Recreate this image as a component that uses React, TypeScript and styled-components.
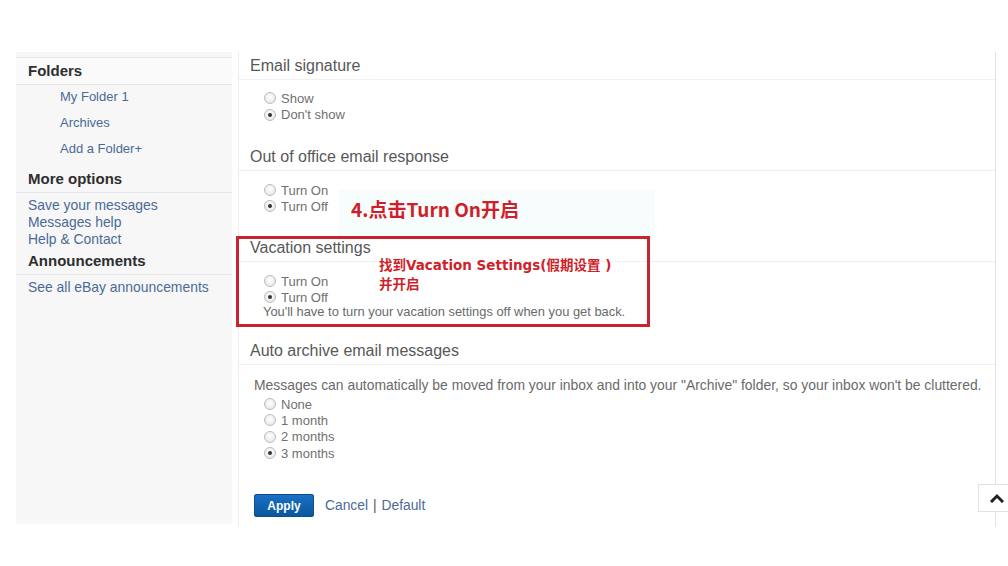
import React from "react";
import styled, { createGlobalStyle } from "styled-components";

const Global = createGlobalStyle`
  html, body { margin: 0; padding: 0; background: #ffffff; }
  body { font-family: "Liberation Sans", Arial, sans-serif; }
  #root { width: 1008px; height: 566px; overflow: hidden; position: relative; }
`;

const Page = styled.div`
  display: flex;
  align-items: flex-start;
  padding: 52px 0 0 16px;
  position: relative;
  height: 566px;
  box-sizing: border-box;
`;

const Sidebar = styled.aside`
  width: 216px;
  height: 470px;
  background: #f7f7f7;
  padding-top: 5px;
  box-sizing: border-box;
  box-shadow: 0 2px 2px rgba(0, 0, 0, 0.03);
`;

const SideHeader = styled.div<{ $top?: boolean; $mt?: number }>`
  height: 26px;
  line-height: 26px;
  margin-top: ${(p) => p.$mt ?? 0}px;
  padding-left: 12px;
  font-size: 15px;
  font-weight: bold;
  color: #2e2e2e;
  border-bottom: 1px solid #e6e6e6;
  border-top: ${(p) => (p.$top ? "1px solid #e6e6e6" : "none")};
  background: ${(p) => (p.$top ? "#fafafa" : "transparent")};
`;

const FolderList = styled.div`
  display: flex;
  flex-direction: column;
  padding-left: 44px;
  margin-top: -1px;
`;

const FolderLink = styled.a`
  height: 26px;
  line-height: 26px;
  font-size: 13px;
  color: #4a6a96;
  text-decoration: none;
`;

const LinkList = styled.div<{ $mt?: number }>`
  display: flex;
  flex-direction: column;
  padding-left: 12px;
  margin-top: ${(p) => p.$mt ?? 4}px;
`;

const SideLink = styled.a`
  height: 17px;
  line-height: 17px;
  font-size: 13.9px;
  color: #4a6a96;
  text-decoration: none;
`;

const Main = styled.main`
  margin-left: 6px;
  width: 756px;
  height: 475px;
  border-left: 1px solid #ececec;
  border-right: 1px solid #e2e2e2;
  position: relative;
`;

const Section = styled.section`
  position: relative;
`;

const SectionHeader = styled.h2`
  margin: 0;
  height: 28px;
  line-height: 28px;
  padding-left: 11px;
  font-size: 16px;
  font-weight: normal;
  color: #585858;
  border-bottom: 1px solid #f0f0f0;
  box-sizing: border-box;
`;

const SectionBody = styled.div<{ $pt: number; $pb: number; $pl?: number }>`
  padding: ${(p) => p.$pt}px 0 ${(p) => p.$pb}px ${(p) => p.$pl ?? 25}px;
  display: flex;
  flex-direction: column;
`;

const RadioRow = styled.label<{ $h?: number }>`
  display: flex;
  align-items: center;
  height: ${(p) => p.$h ?? 16}px;
  font-size: 13px;
  color: #707070;
  gap: 5px;
`;

const RadioDot = styled.span<{ $on?: boolean }>`
  width: 10px;
  height: 10px;
  border-radius: 50%;
  border: 1px solid #bcbcbc;
  background: radial-gradient(circle at 50% 40%, #ffffff 0%, #e2e2e2 100%);
  display: inline-flex;
  align-items: center;
  justify-content: center;
  flex: none;
  &::after {
    content: "";
    width: 4px;
    height: 4px;
    border-radius: 50%;
    background: ${(p) => (p.$on ? "#333333" : "transparent")};
  }
`;

const Note = styled.div`
  font-size: 12.9px;
  line-height: 14px;
  color: #6a6a6a;
  margin-left: -1px;
`;

const Message = styled.div`
  font-size: 13.9px;
  line-height: 16px;
  color: #6a6a6a;
  margin-left: -10px;
  white-space: nowrap;
`;

const RadioGroup = styled.div`
  display: flex;
  flex-direction: column;
  margin-top: 3px;
`;

const Actions = styled.div`
  display: flex;
  align-items: center;
  gap: 11px;
  margin: 33px 0 0 15px;
  font-size: 13.8px;
  color: #6a6a6a;
`;

const ApplyButton = styled.button`
  width: 60px;
  height: 23px;
  border: 1px solid #0b4f8f;
  border-radius: 2px;
  background: linear-gradient(#1a70c4, #0a579f);
  color: #ffffff;
  font-family: "Liberation Sans", Arial, sans-serif;
  font-size: 12px;
  font-weight: bold;
  padding: 0;
`;

const TextLink = styled.a`
  color: #4a6a96;
  text-decoration: none;
`;

const Sep = styled.span`
  margin: 0 5px;
  color: #555;
`;

const Annotation = styled.div<{ $size: number; $wide?: boolean }>`
  position: absolute;
  color: #cf1f2a;
  font-family: ${(p) =>
    p.$wide
      ? '"DejaVu Sans", "Noto Sans CJK SC", sans-serif'
      : '"Noto Sans CJK SC", "Noto Sans", sans-serif'};
  font-weight: bold;
  font-size: ${(p) => p.$size}px;
  white-space: nowrap;
`;

const Tint = styled.div`
  position: absolute;
  left: 100px;
  top: 138px;
  width: 316px;
  height: 50px;
  background: #f7fdfd;
`;

const RedBox = styled.div`
  position: absolute;
  left: -3px;
  top: 184px;
  width: 408px;
  height: 85px;
  border: 3px solid #c7242d;
`;

const ScrollTop = styled.div`
  position: absolute;
  left: 978px;
  top: 484px;
  width: 32px;
  height: 28px;
  background: #ffffff;
  border: 1px solid #e2e2e2;
  display: flex;
  align-items: center;
  justify-content: center;
  padding-left: 6px;
  box-sizing: border-box;
`;

const Radio = ({ label, on, h }: { label: string; on?: boolean; h?: number }) => (
  <RadioRow $h={h}>
    <RadioDot $on={on} />
    {label}
  </RadioRow>
);

export default function App() {
  return (
    <>
      <Global />
      <Page>
        <Sidebar>
          <SideHeader $top>Folders</SideHeader>
          <FolderList>
            <FolderLink>My Folder 1</FolderLink>
            <FolderLink>Archives</FolderLink>
            <FolderLink>Add a Folder+</FolderLink>
          </FolderList>
          <SideHeader $mt={4}>More options</SideHeader>
          <LinkList>
            <SideLink>Save your messages</SideLink>
            <SideLink>Messages help</SideLink>
            <SideLink>Help &amp; Contact</SideLink>
          </LinkList>
          <SideHeader>Announcements</SideHeader>
          <LinkList>
            <SideLink>See all eBay announcements</SideLink>
          </LinkList>
        </Sidebar>
        <Main>
          <Tint />
          <Section>
            <SectionHeader>Email signature</SectionHeader>
            <SectionBody $pt={10} $pb={20}>
              <Radio label="Show" h={16.5} />
              <Radio label="Don't show" on h={16.5} />
            </SectionBody>
          </Section>
          <Section>
            <SectionHeader>Out of office email response</SectionHeader>
            <SectionBody $pt={11} $pb={20}>
              <Radio label="Turn On" />
              <Radio label="Turn Off" on />
            </SectionBody>
          </Section>
          <Section>
            <SectionHeader>Vacation settings</SectionHeader>
            <SectionBody $pt={11} $pb={18}>
              <Radio label="Turn On" />
              <Radio label="Turn Off" on />
              <Note>You'll have to turn your vacation settings off when you get back.</Note>
            </SectionBody>
          </Section>
          <Section>
            <SectionHeader>Auto archive email messages</SectionHeader>
            <SectionBody $pt={12} $pb={0}>
              <Message>
                Messages can automatically be moved from your inbox and into your "Archive" folder, so your
                inbox won't be cluttered.
              </Message>
              <RadioGroup>
                <Radio label="None" h={16.3} />
                <Radio label="1 month" h={16.3} />
                <Radio label="2 months" h={16.3} />
                <Radio label="3 months" on h={16.3} />
              </RadioGroup>
            </SectionBody>
          </Section>
          <Actions>
            <ApplyButton>Apply</ApplyButton>
            <span>
              <TextLink>Cancel</TextLink>
              <Sep>|</Sep>
              <TextLink>Default</TextLink>
            </span>
          </Actions>
          <RedBox />
          <Annotation $size={19} style={{ left: 112, top: 143 }}>
            4.点击Turn On开启
          </Annotation>
          <Annotation $size={13.5} $wide style={{ left: 140, top: 202 }}>
            找到Vacation Settings(假期设置 )
          </Annotation>
          <Annotation $size={13.5} $wide style={{ left: 140, top: 221 }}>
            并开启
          </Annotation>
        </Main>
        <ScrollTop>
          <svg width="14" height="10" viewBox="0 0 14 10">
            <path d="M2 8 L7 3 L12 8" fill="none" stroke="#222" strokeWidth="3" strokeLinecap="square" />
          </svg>
        </ScrollTop>
      </Page>
    </>
  );
}
